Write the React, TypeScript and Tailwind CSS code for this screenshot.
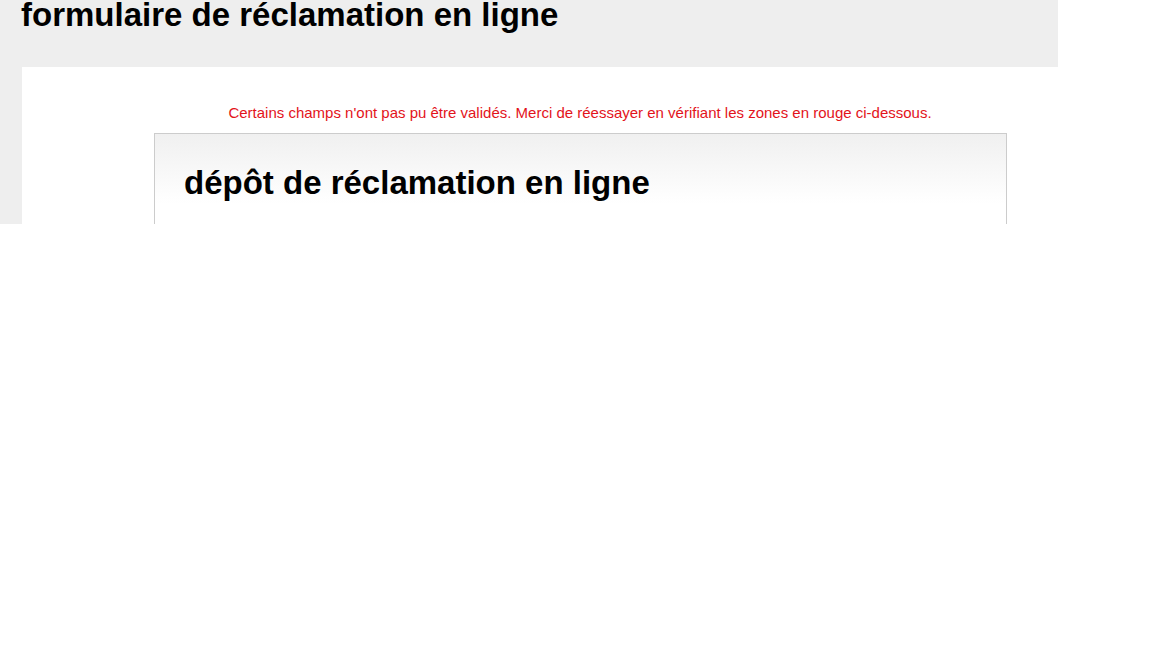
export default function App() {
  return (
    <div className="h-[648px] w-[1152px] bg-white font-['Liberation_Sans',Arial,sans-serif]">
      <div className="h-[224px] w-[1058px] overflow-hidden bg-[#eeeeee]">
        <h1 className="-mt-[2px] pl-[21px] text-[33px] font-bold leading-[33px] text-black">
          formulaire de réclamation en ligne
        </h1>
        <div className="ml-[22px] mt-[36px] h-[200px] bg-white pt-[37px]">
          <p className="pl-[80px] text-center text-[15px] leading-[18px] text-[#e3131b]">
            Certains champs n'ont pas pu être validés. Merci de réessayer en vérifiant les zones en rouge ci-dessous.
          </p>
          <div className="ml-[132px] mt-[11px] h-[120px] w-[853px] border border-[#cccccc] bg-gradient-to-b from-[#f0f0f0] to-white to-[70px] px-[29px] pt-[32px]">
            <h2 className="text-[33px] font-bold leading-[34px] text-black">
              dépôt de réclamation en ligne
            </h2>
          </div>
        </div>
      </div>
    </div>
  );
}
